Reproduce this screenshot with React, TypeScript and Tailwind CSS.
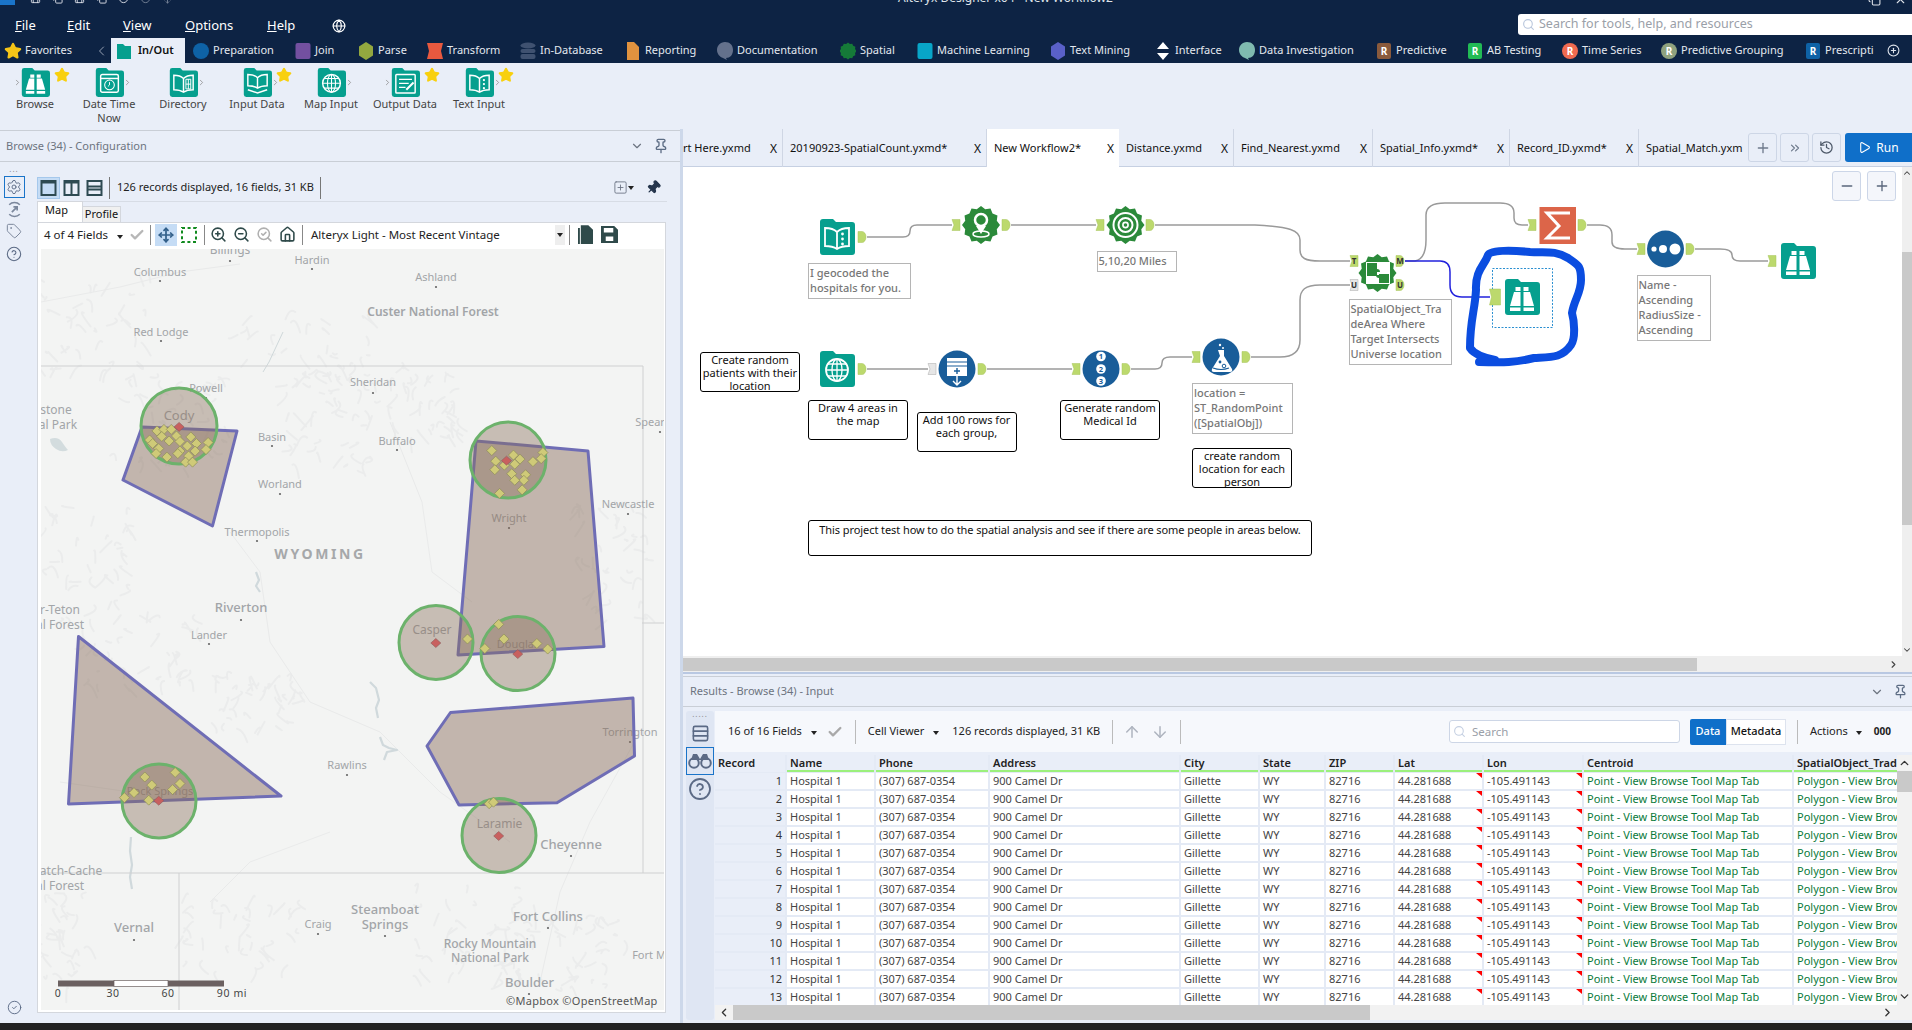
import type { ReactNode } from "react";
import {
  ArrowDown,
  ArrowUp,
  Check,
  ChevronDown,
  ChevronLeft,
  ChevronRight,
  ChevronUp,
  ChevronsRight,
  CircleCheck,
  CircleHelp,
  CirclePlus,
  Copy,
  Globe,
  History,
  House,
  Minus,
  Move,
  Pin,
  Play,
  Plus,
  Rows3,
  Save,
  Search,
  SearchCheck,
  Settings,
  SquarePlus,
  Star,
  Tag,
  ZoomIn,
  ZoomOut,
  X,
} from "lucide-react";

const TEAL = "#069f8e";
const GREEN = "#2b8a3a";
const BLUE = "#195d99";
const DARK = "#2e4a52";

function Caret() {
  return <span className="inline-block w-0 h-0 border-x-[3px] border-x-transparent border-t-[4px] border-t-[#222]" />;
}

function sealPoints(cx: number, cy: number, r: number) {
  const pts: string[] = [];
  for (let i = 0; i < 24; i++) {
    const a = (i * Math.PI) / 12;
    const rad = i % 2 === 0 ? r : r * 0.86;
    pts.push(`${cx + rad * Math.sin(a)},${cy - rad * Math.cos(a)}`);
  }
  return pts.join(" ");
}

/* ---------- tool glyphs, all on a 36x36 folder ---------- */

function Glyph({ kind }: { kind: string }) {
  const line = { fill: "none", stroke: "#fff", strokeWidth: 1.8 };
  const folder = (
    <path d="M1 3a3 3 0 0 1 3-3h10l3 3h16a3 3 0 0 1 3 3v27a3 3 0 0 1-3 3H4a3 3 0 0 1-3-3z" fill={TEAL} />
  );
  const book = <path d="M6 9c4 0 9 1 12 4 3-3 8-4 12-4v18c-4 0-9 1-12 3-3-2-8-3-12-3zM18 13v17" {...line} />;
  if (kind === "browse")
    return (
      <>
        {folder}
        <path
          d="M11.5 8h5v4h-5zM10 13h6.5v14H6zM6 28.5h10.5V32H6zM19.5 8h5v4h-5zM19.5 13H26l4 14H19.5zM19.5 28.5H30V32H19.5z"
          fill="#fff"
        />
      </>
    );
  if (kind === "clock")
    return (
      <>
        {folder}
        <rect x="7" y="8" width="22" height="22" rx="2" {...line} />
        <path d="M7 13h22" {...line} />
        <circle cx="18" cy="21" r="6" {...line} strokeWidth={1.3} />
        <path d="M18 17.5V21l-2 2" {...line} strokeWidth={1.2} />
      </>
    );
  if (kind === "directory")
    return (
      <>
        {folder}
        {book}
        <path d="M21 14h6v12h-6zM21 20h6M24 14v12" {...line} strokeWidth={1.2} />
      </>
    );
  if (kind === "input")
    return (
      <>
        {folder}
        <path d="M6 8c4 0 9 1 12 4 3-3 8-4 12-4v14c-4 0-9 1-12 3-3-2-8-3-12-3zM18 12v13" {...line} />
        <path d="M6 27l12 4 12-4" {...line} />
      </>
    );
  if (kind === "map")
    return (
      <>
        {folder}
        <circle cx="18" cy="19" r="11" {...line} />
        <ellipse cx="18" cy="19" rx="5" ry="11" {...line} strokeWidth={1.3} />
        <path d="M7 19h22M9 13h18M9 25h18M18 8v22" {...line} strokeWidth={1.3} />
      </>
    );
  if (kind === "output")
    return (
      <>
        {folder}
        <rect x="6" y="8" width="24" height="23" rx="1" {...line} />
        <path d="M10 14h16M10 19h12M10 24h8" {...line} strokeWidth={1.5} />
        <path d="M19 27l9-9" stroke="#fff" strokeWidth={2.5} />
      </>
    );
  return (
    <>
      {folder}
      {book}
      <circle cx="23.5" cy="15" r="1.4" fill="#fff" />
      <circle cx="23.5" cy="20" r="1.4" fill="#fff" />
      <circle cx="23.5" cy="25" r="1.4" fill="#fff" />
    </>
  );
}

/* ---------- header ---------- */

function PaletteIcon({ shape, color, text }: { shape: string; color: string; text?: string }) {
  if (shape === "star") return <Star size={18} fill="#f5c518" stroke="#f5c518" className="shrink-0" />;
  return (
    <svg viewBox="0 0 16 18" className="w-4 h-[18px] shrink-0">
      {shape === "folder" && <path d="M1 2h6l2 2h6v13H1z" fill={color} />}
      {shape === "circle" && <circle cx="8" cy="9" r="8" fill={color} />}
      {shape === "square" && <rect x="0.5" y="1" width="15" height="16" rx="2" fill={color} />}
      {shape === "hex" && <polygon points="8,0 15,4.5 15,13.5 8,18 1,13.5 1,4.5" fill={color} />}
      {shape === "banner" && <polygon points="0,1 16,1 14,9 16,17 0,17 2,9" fill={color} />}
      {shape === "db" && (
        <g fill={color}>
          <ellipse cx="8" cy="3.5" rx="7.5" ry="3" />
          <rect x="0.5" y="7" width="15" height="4" rx="2" />
          <rect x="0.5" y="12" width="15" height="5" rx="2" />
        </g>
      )}
      {shape === "doc" && <path d="M2 0h7l5 5v13H2z" fill={color} />}
      {shape === "bubble" && <path d="M8 0c5 0 8 3 8 8s-3 8-7 8l1 2-4-2C3 15 0 12 0 8s3-8 8-8z" fill={color} />}
      {shape === "seal" && <polygon points={sealPoints(8, 9, 8.5)} fill={color} />}
      {shape === "arrows" && <path d="M8 0l6 7H2zM8 18l6-7H2z" fill={color} />}
      {shape === "rsquare" && <rect x="1" y="1" width="14" height="16" rx="2" fill={color} />}
      {text && (
        <text x="8" y="12.5" textAnchor="middle" fontSize="10" fontWeight="700" fill="#fff">
          {text}
        </text>
      )}
    </svg>
  );
}

const palette = [
  { label: "Preparation", shape: "circle", color: "#0e62a6" },
  { label: "Join", shape: "square", color: "#7350a0" },
  { label: "Parse", shape: "hex", color: "#93a83f" },
  { label: "Transform", shape: "banner", color: "#e8593f" },
  { label: "In-Database", shape: "db", color: "#3f5170" },
  { label: "Reporting", shape: "doc", color: "#e0923f" },
  { label: "Documentation", shape: "bubble", color: "#64718c" },
  { label: "Spatial", shape: "seal", color: "#157a38" },
  { label: "Machine Learning", shape: "square", color: "#08a5c8" },
  { label: "Text Mining", shape: "hex", color: "#5960c8" },
  { label: "Interface", shape: "arrows", color: "#fff" },
  { label: "Data Investigation", shape: "bubble", color: "#7fbab0" },
  { label: "Predictive", shape: "rsquare", color: "#8a5a3c", text: "R" },
  { label: "AB Testing", shape: "rsquare", color: "#22bb55", text: "R" },
  { label: "Time Series", shape: "circle", color: "#f06a50", text: "R" },
  { label: "Predictive Grouping", shape: "circle", color: "#8fa27e", text: "R" },
  { label: "Prescripti", shape: "rsquare", color: "#0e62a6", text: "R" },
];

const favoriteTools = [
  { label: ["Browse"], kind: "browse", star: true, left: true },
  { label: ["Date Time", "Now"], kind: "clock", right: true },
  { label: ["Directory"], kind: "directory", right: true },
  { label: ["Input Data"], kind: "input", star: true, right: true },
  { label: ["Map Input"], kind: "map", right: true },
  { label: ["Output Data"], kind: "output", star: true, left: true },
  { label: ["Text Input"], kind: "text", star: true, right: true },
];

function Header() {
  return (
    <div className="bg-[#0d2344] h-[63px] shrink-0 text-white overflow-hidden">
      <div className="h-[14px] overflow-hidden flex items-start text-[#dfe3ea]">
        <div className="w-[15px] h-[5px] bg-[#1a74c9]" />
        <div className="flex gap-[11px] ml-[15px] -mt-[7px]">
          <Save size={11} />
          <Copy size={11} />
          <Save size={11} />
          <Copy size={11} />
          <History size={11} />
          <History size={11} className="opacity-50" />
          <Move size={11} className="opacity-50" />
        </div>
        <span className="ml-[725px] -mt-[11px] text-[12px] whitespace-nowrap">Alteryx Designer x64 - New Workflow2</span>
        <Copy size={13} className="ml-auto -mt-[7px]" />
        <X size={13} className="ml-[13px] mr-[5px] -mt-[7px]" />
      </div>
      <div className="h-[24px] flex items-center text-[13px]">
        <span className="ml-[15px] w-[52px]"><u>F</u>ile</span>
        <span className="w-[56px]"><u>E</u>dit</span>
        <span className="w-[62px]"><u>V</u>iew</span>
        <span className="w-[82px]"><u>O</u>ptions</span>
        <span className="w-[65px]"><u>H</u>elp</span>
        <Globe size={14} />
        <div className="ml-auto mb-[3px] w-[394px] h-[21px] bg-white rounded-l-[3px] flex items-center pl-[4px] gap-[4px] text-[12.5px] text-[#9aa0a8]">
          <Search size={13} className="text-[#b8c6dc]" />
          Search for tools, help, and resources
        </div>
      </div>
      <div className="h-[25px] flex items-center text-[11px] text-[#e4e8ef] w-[1912px]">
        <div className="w-[92px] shrink-0 pl-1 flex items-center gap-[3px]">
          <PaletteIcon shape="star" color="" />
          Favorites
        </div>
        <ChevronLeft size={16} strokeWidth={1.3} className="shrink-0 w-[19px] text-[#aab4c4]" />
        <div className="w-[74px] shrink-0 h-full bg-[#e9eef8] text-[#111] font-semibold flex items-center gap-[6px] pl-[5px]">
          <PaletteIcon shape="folder" color={TEAL} />
          In/Out
        </div>
        <div className="w-[8px] shrink-0" />
        <div className="shrink-0 grid grid-cols-[102px_63px_69px_93px_105px_92px_123px_77px_133px_105px_84px_137px_91px_95px_99px_144px_82px] items-center">
          {palette.map((p) => (
            <div key={p.label} className="flex items-center gap-[4px] whitespace-nowrap overflow-hidden">
              <PaletteIcon shape={p.shape} color={p.color} text={p.text} />
              {p.label}
            </div>
          ))}
        </div>
        <CirclePlus size={13} className="shrink-0 text-[#dfe4ec]" />
      </div>
    </div>
  );
}

function ToolPalette() {
  return (
    <div className="h-[66px] shrink-0 bg-[#e9eef8] grid grid-cols-[74px_74px_74px_74px_74px_74px_74px] -ml-[2px] pt-[5px]">
      {favoriteTools.map((t) => (
        <div key={t.kind} className="flex flex-col items-center text-[#444] text-[11px] leading-[14px]">
          <div className="relative w-[29px] h-[29px]">
            <svg viewBox="0 0 36 36" className="w-[29px] h-[29px]">
              <Glyph kind={t.kind} />
            </svg>
            {t.left && <ChevronRight size={9} className="absolute -left-[8px] top-[10px] text-[#888]" />}
            {t.right && <ChevronRight size={9} className="absolute -right-[8px] top-[10px] text-[#888]" />}
            {t.star && (
              <Star size={16} fill="#f8d00f" stroke="#f8d00f" className="absolute -right-[20px] -top-[1px]" />
            )}
          </div>
          <div className="text-center">
            {t.label.map((l) => (
              <div key={l}>{l}</div>
            ))}
          </div>
        </div>
      ))}
    </div>
  );
}

/* ---------- map ---------- */

// map points were read from a crop, so convert from crop space to page space
const zx = (x: number) => x / 2.306;
const zy = (y: number) => y / 1.985 + 240;

const polygons = [
  "142,425 237,429 212.5,524 123,478",
  "476,439 588,449 604,644.5 458,653",
  "78.5,634.5 281,794 68.5,802",
  "450.5,710.5 633,696 634.5,754 557,800.7 459,803 427,744",
];

const circles = [
  [179, 424, 38],
  [508, 458, 38],
  [436, 640.5, 37],
  [518, 651.6, 37],
  [159, 799, 37],
  [499, 833.5, 37],
];

const yellow = [
  [362, 375], [378, 372], [395, 372], [373, 386], [390, 395], [407, 385], [345, 393], [352, 400],
  [366, 410], [385, 427], [415, 396], [440, 387], [453, 400], [480, 398], [432, 405], [415, 415],
  [450, 415], [475, 412], [435, 425], [428, 437], [444, 437], [410, 420], [360, 420],
  [1134, 414], [1184, 423], [1143, 435], [1199, 431], [1187, 441], [1163, 443], [1141, 452],
  [1229, 436], [1252, 418], [1248, 430], [1180, 460], [1212, 462], [1208, 473], [1187, 473],
  [1204, 492], [1152, 499], [1078, 788],
  [1150, 759], [1162, 788], [1238, 797], [1263, 808], [1118, 807],
  [334, 1062], [350, 1078], [404, 1053], [415, 1075], [398, 1087], [309, 1093], [287, 1103], [343, 1108],
  [1128, 1115], [1138, 1112],
];

const red = [[413, 367], [1168, 434], [1005, 796], [1194, 818], [366, 1109], [1150, 1179]];

const labels: [string, number, number, number?, string?][] = [
  ["Billings", 230, 253, 12],
  ["Hardin", 312, 263],
  ["Columbus", 160, 275],
  ["Ashland", 436, 280],
  ["Custer National Forest", 433, 315, 12, "600"],
  ["Red Lodge", 161, 335],
  ["Powell", 206, 391],
  ["Sheridan", 373, 385],
  ["Spear", 650, 425],
  ["stone", 56, 413, 12],
  ["al Park", 58, 428, 12],
  ["Cody", 179, 419, 13],
  ["Basin", 272, 440],
  ["Buffalo", 397, 444],
  ["Worland", 280, 487],
  ["Newcastle", 628, 507],
  ["Wright", 509, 521],
  ["Thermopolis", 257, 535],
  ["Riverton", 241, 611, 13, "500"],
  ["r-Teton", 60, 613, 12],
  ["al Forest", 60, 628, 12],
  ["Lander", 209, 638],
  ["Casper", 432, 633, 12],
  ["Douglas", 518, 647],
  ["Torrington", 630, 735],
  ["Rawlins", 347, 768],
  ["Rock Springs", 160, 794],
  ["Laramie", 499.5, 827, 12],
  ["Cheyenne", 571, 848, 13, "500"],
  ["atch-Cache", 71, 874, 12],
  ["al Forest", 60, 889, 12],
  ["Steamboat", 385, 913, 13, "500"],
  ["Springs", 385, 928, 13, "500"],
  ["Vernal", 134, 931, 13, "500"],
  ["Craig", 318, 927],
  ["Fort Collins", 548, 920, 13, "500"],
  ["Rocky Mountain", 490, 947, 12, "500"],
  ["National Park", 490, 961, 12, "500"],
  ["Fort M", 649, 958],
  ["Boulder", 529.5, 986, 13, "500"],
];

const dots = [
  [230, 259], [312, 267], [160, 279], [436, 285], [161, 339], [206, 396], [373, 391], [660, 430],
  [272, 444], [397, 448], [280, 492], [628, 512], [509, 526], [257, 539], [241, 618], [209, 642],
  [630, 740], [347, 773], [571, 854], [385, 934], [134, 938], [318, 932], [548, 926], [529, 992],
];

// soft relief strokes, same sequence every render
function reliefStrokes() {
  const zones = [
    [95, 320, 55, 55], [170, 420, 60, 50], [300, 350, 70, 40], [90, 560, 45, 60], [140, 650, 60, 40],
    [330, 420, 45, 50], [420, 400, 40, 40], [470, 930, 70, 50], [560, 950, 70, 40], [240, 930, 60, 40],
    [60, 940, 30, 50], [610, 560, 40, 60], [260, 700, 50, 30],
  ];
  let seed = 7;
  const next = () => {
    seed = (seed * 16807) % 2147483647;
    return seed / 2147483647;
  };
  const out: string[] = [];
  zones.forEach(([cx, cy, rx, ry]) => {
    for (let i = 0; i < 40; i++) {
      const x = cx + (next() * 2 - 1) * rx;
      const y = cy + (next() * 2 - 1) * ry;
      out.push(`M${x.toFixed(1)} ${y.toFixed(1)}q${(next() * 14 - 7).toFixed(1)} ${(next() * 12 - 6).toFixed(1)} ${(next() * 22 - 11).toFixed(1)} ${(next() * 14).toFixed(1)}`);
    }
  });
  return out.join("");
}

function MapCanvas() {
  return (
    <svg viewBox="41 247 623 761" className="w-[623px] h-[761px] block bg-[#f3f4f3] font-['Noto_Sans',sans-serif]">
      <path d={reliefStrokes()} fill="none" stroke="#ebecec" strokeWidth="2" strokeLinecap="round" />
      <path d="M41 300L120 285 180 270 240 262M390 420l12 30 20 50 10 70 40 30M230 530l30 40 10 70 40 60 70 30 60 60 70 50M60 780l70 10M640 730l-50 90-30 70-20 90M330 830l-80 30-40 40" fill="none" stroke="#e9eaea" strokeWidth="1" />
      <path d="M50 437q8-3 12 3t6 8q-6 3-12-1t-6-10z" fill="#d3dcde" />
      <path d="M256 570l3 8-3 6 4 6M370 680l6 6 3 12-3 8 2 10M380 735l3 8 6 3 8 2-10 2-3 8M131 835l-1 14 2 14-2 12 2 12" fill="none" stroke="#d0d9dc" strokeWidth="2.2" strokeLinejoin="round" />
      <path d="M283 330l-14 30-6 10" fill="none" stroke="#cfd8da" strokeWidth="1" />
      <path d="M41 364H643V871M41 871H664M179 871V1008M642 621H664" fill="none" stroke="#cfd0d1" strokeWidth="1" />
      {labels.map(([t, x, y, size, weight]) => (
        <text key={`${t}${x}`} x={x} y={y - 1} textAnchor="middle" fontSize={size ?? 11} fontWeight={weight ?? 400} fill="#a2a5a8">
          {t}
        </text>
      ))}
      <text x="320" y="557" textAnchor="middle" fontSize="14" fontWeight="700" letterSpacing="2.6" fill="#a6a8aa">
        WYOMING
      </text>
      {dots.map(([x, y]) => (
        <circle key={`${x}-${y}`} cx={x} cy={y} r="1.1" fill="#666" />
      ))}
      {polygons.map((p) => (
        <polygon key={p} points={p} fill="#8b6f5e" fillOpacity="0.47" stroke="#6f6db5" strokeWidth="3" strokeLinejoin="round" />
      ))}
      {circles.map(([x, y, r]) => (
        <circle key={x} cx={x} cy={y} r={r} fill="#8b6f5e" fillOpacity="0.42" stroke="#6cb26b" strokeWidth="3" />
      ))}
      {yellow.map(([x, y]) => {
        const cx = zx(x);
        const cy = zy(y);
        return (
          <polygon
            key={`${x}-${y}`}
            points={`${cx},${cy - 5} ${cx + 5},${cy} ${cx},${cy + 5} ${cx - 5},${cy}`}
            fill="#cfca78"
            stroke="#8c8c5a"
            strokeWidth="0.7"
          />
        );
      })}
      {red.map(([x, y]) => {
        const cx = zx(x);
        const cy = zy(y);
        return (
          <polygon
            key={`${x}-${y}`}
            points={`${cx},${cy - 4.5} ${cx + 5},${cy} ${cx},${cy + 4.5} ${cx - 5},${cy}`}
            fill="#c8605f"
            stroke="#8c5a5a"
            strokeWidth="0.6"
          />
        );
      })}
      <rect x="58" y="978.5" width="56" height="6" fill="#6b6060" />
      <rect x="114" y="978.5" width="54" height="6" fill="#fff" stroke="#6b6060" strokeWidth="0.7" />
      <rect x="168" y="978.5" width="56" height="6" fill="#6b6060" />
      <g fontSize="10.5" fill="#444" letterSpacing="0.6">
        <text x="58" y="995" textAnchor="middle">0</text>
        <text x="113" y="995" textAnchor="middle">30</text>
        <text x="168" y="995" textAnchor="middle">60</text>
        <text x="232" y="995" textAnchor="middle">90 mi</text>
      </g>
      <text x="506" y="1003" fontSize="11" fill="#555" letterSpacing="0.3">©Mapbox ©OpenStreetMap</text>
    </svg>
  );
}

function LayoutIcon({ kind }: { kind: "single" | "cols" | "rows" }) {
  return (
    <svg viewBox="0 0 16 16" className="w-[17px] h-[16px]" fill="none" stroke={DARK}>
      <rect x="1" y="1" width="14" height="14" strokeWidth="2" />
      {kind !== "rows" && <path d="M1 2.5h14" strokeWidth="2" />}
      {kind === "cols" && <path d="M8 1v14" strokeWidth="2" />}
      {kind === "rows" && <path d="M1 6.5h14M1 9.5h14" strokeWidth="2" />}
    </svg>
  );
}

function ConfigPanel() {
  return (
    <div className="w-[680px] shrink-0 flex flex-col">
      <div className="h-[32px] mt-[1px] border-y border-[#c9ced6] flex items-center pl-[6px] pr-[11px] text-[11px] text-[#6d7480]">
        <span className="flex-1">Browse (34) - Configuration</span>
        <ChevronDown size={14} className="mr-[9px] text-[#6d7480]" />
        <Pin size={16} className="text-[#5c6c84]" />
      </div>
      <div className="flex-1 flex min-h-0">
        <div className="w-[33px] flex flex-col items-center pt-[4px] text-[#5b6a85]">
          <div className="text-[8px] leading-[6px] tracking-[1px] text-[#888] mr-[5px]">...</div>
          <div className="mt-[4px] w-[21px] h-[22px] border border-[#1a74c9] flex items-center justify-center mr-[5px]">
            <Settings size={16} strokeWidth={1.4} />
          </div>
          <svg viewBox="0 0 16 16" className="mt-[3px] mr-[5px] w-[17px] h-[17px]" fill="none" stroke="#7b879c" strokeWidth="1.4">
            <path d="M3 3.5A7 7 0 0 1 13 3.5M13 12.5A7 7 0 0 1 3 12.5" />
            <path d="M5.5 10.5l5-5M7 5.5h3.5V9" strokeWidth="1.6" />
          </svg>
          <Tag size={16} strokeWidth={1.5} className="mt-[5px] mr-[5px] text-[#7b879c]" />
          <CircleHelp size={16} strokeWidth={1.6} className="mt-[7px] mr-[5px]" />
          <CircleCheck size={15} strokeWidth={1.5} className="mt-auto mb-[8px] mr-[5px]" />
        </div>
        <div className="w-[630px] ml-[4px] flex flex-col">
          <div className="h-[38px] pt-[13px] flex items-center text-[11px] text-[#222]">
            <div className="w-[23px] h-[22px] bg-[#c5dcf5] border border-[#a5c8ec] flex items-center justify-center">
              <LayoutIcon kind="single" />
            </div>
            <span className="ml-[3px]"><LayoutIcon kind="cols" /></span>
            <span className="ml-[6px]"><LayoutIcon kind="rows" /></span>
            <div className="ml-[6px] w-px h-[22px] bg-[#777]" />
            <span className="ml-[7px]">126 records displayed, 16 fields, 31 KB</span>
            <div className="ml-[6px] w-px h-[22px] bg-[#777]" />
            <SquarePlus size={15} strokeWidth={1.4} className="ml-auto text-[#6b7484]" />
            <Caret />
            <Pin size={15} fill="#26364d" className="ml-[12px] mr-[6px] rotate-45 text-[#26364d]" />
          </div>
          <div className="h-[21px] flex items-end text-[11px] border-t border-[#d7dce5] mt-[1px]">
            <div className="w-[46px] h-[21px] pb-[3px] pl-[7px] bg-white border border-b-0 border-[#d4d7dd] flex items-center text-[#111]">
              Map
            </div>
            <div className="w-[38px] h-[16px] bg-[#f0f0f0] border border-b-0 border-l-0 border-[#d4d7dd] flex items-center justify-center text-[#111]">
              Profile
            </div>
          </div>
          <div className="h-[791px] shrink-0 bg-white border border-[#d4d7dd] w-[629px] flex flex-col overflow-hidden">
            <div className="h-[26px] shrink-0 pb-[3px] flex items-center text-[11.5px] text-[#222]">
              <span className="ml-[6px]">4 of 4 Fields</span>
              <span className="ml-[9px]"><Caret /></span>
              <Check size={16} strokeWidth={3.5} className="ml-[6px] text-[#b7b7b7]" />
              <div className="ml-[5px] w-px h-[20px] bg-[#888]" />
              <div className="ml-[4px] w-[22px] h-[22px] bg-[#c5dcf5] flex items-center justify-center">
                <Move size={16} strokeWidth={2.6} className="text-[#33608a]" />
              </div>
              <svg viewBox="0 0 16 16" className="ml-[4px] w-[16px] h-[16px]" fill="none" stroke="#118a1f" strokeWidth="2">
                <rect x="1" y="1" width="14" height="14" strokeDasharray="3 2.6" />
              </svg>
              <div className="ml-[7px] w-px h-[20px] bg-[#888]" />
              <ZoomIn size={17} strokeWidth={2.2} className="ml-[5px] text-[#2f4a4a]" />
              <ZoomOut size={17} strokeWidth={2.2} className="ml-[6px] text-[#2f4a4a]" />
              <SearchCheck size={17} strokeWidth={2.2} className="ml-[6px] text-[#b0b0b0]" />
              <House size={17} strokeWidth={2.2} className="ml-[6px] text-[#2f4a4a]" />
              <div className="ml-[6px] w-px h-[20px] bg-[#888]" />
              <span className="ml-[8px] w-[244px]">Alteryx Light - Most Recent Vintage</span>
              <div className="w-[10px] h-[20px] bg-[#eee] flex items-center justify-center">
                <Caret />
              </div>
              <div className="ml-[4px] w-px h-[20px] bg-[#888]" />
              <svg viewBox="0 0 16 20" className="ml-[8px] w-[15px] h-[19px]" fill="#2f4a4a">
                <path d="M3 0h8l5 5v15H3z" />
                <path d="M0 3v17h2V3z" />
              </svg>
              <svg viewBox="0 0 18 18" className="ml-[8px] w-[17px] h-[17px]" fill="#2f4a4a">
                <path d="M0 0h14l4 4v14H0zM3 2v5h10V2zM5 11v5h8v-5z" fillRule="evenodd" />
              </svg>
            </div>
            <div className="ml-[3px]">
              <MapCanvas />
            </div>
          </div>
        </div>
      </div>
    </div>
  );
}

/* ---------- workflow canvas ---------- */

const docTabs = [
  { name: "rt Here.yxmd" },
  { name: "20190923-SpatialCount.yxmd*" },
  { name: "New Workflow2*", active: true },
  { name: "Distance.yxmd" },
  { name: "Find_Nearest.yxmd" },
  { name: "Spatial_Info.yxmd*" },
  { name: "Record_ID.yxmd*" },
];

function DocTabs() {
  return (
    <div className="h-[38px] shrink-0 flex items-stretch text-[11px] text-[#111] border-b border-[#c6d0e2]">
      <div className="grid grid-cols-[100px_204px_132px_115px_139px_137px_129px]">
        {docTabs.map((t) => (
          <div
            key={t.name}
            className={
              t.active
                ? "bg-white flex items-center pl-[7px] pr-[5px] h-[38px] pt-[1px] whitespace-nowrap"
                : "flex items-center pl-[7px] first:pl-0 pr-[5px] pt-[1px] border-r border-[#cfd6e4] whitespace-nowrap"
            }
          >
            <span className="flex-1">{t.name}</span>
            <span className="text-[12px]">X</span>
          </div>
        ))}
      </div>
      <div className="w-[106px] pl-[7px] pt-[1px] flex items-center overflow-hidden whitespace-nowrap">Spatial_Match.yxm</div>
      <div className="flex items-center gap-[3px] ml-[3px]">
        <button className="w-[29px] h-[29px] border border-[#cdd6e6] rounded-[3px] flex items-center justify-center text-[#6e7a8c]">
          <Plus size={16} />
        </button>
        <button className="w-[29px] h-[29px] border border-[#cdd6e6] rounded-[3px] flex items-center justify-center text-[#6e7a8c]">
          <ChevronsRight size={14} />
        </button>
        <button className="w-[29px] h-[29px] border border-[#cdd6e6] rounded-[3px] flex items-center justify-center text-[#4d5868]">
          <History size={15} />
        </button>
      </div>
      <button className="ml-[4px] w-[67px] h-[29px] mt-[4px] bg-[#0f6fc9] rounded-l-[3px] text-white text-[12px] flex items-center justify-center gap-[5px]">
        <Play size={13} />
        Run
      </button>
    </div>
  );
}

const comments = [
  { text: ["I geocoded the", "hospitals for you."], x: 808, y: 263, w: 103, h: 36, gray: true },
  { text: ["5,10,20 Miles"], x: 1096.5, y: 251, w: 80, h: 21, gray: true },
  { text: ["Create random", "patients with their", "location"], x: 700, y: 352, w: 100, h: 40 },
  { text: ["Draw 4 areas in", "the map"], x: 808, y: 400, w: 100, h: 40 },
  { text: ["Add 100 rows for", "each group,"], x: 916.5, y: 412, w: 100, h: 40 },
  { text: ["Generate random", "Medical Id"], x: 1060, y: 400, w: 100, h: 40 },
  { text: ["location =", "ST_RandomPoint", "([SpatialObj])"], x: 1192, y: 383, w: 101, h: 51, gray: true },
  { text: ["create random", "location for each", "person"], x: 1192, y: 448, w: 100, h: 40 },
  {
    text: ["SpatialObject_Tra", "deArea Where", "Target Intersects", "Universe location"],
    x: 1348.5,
    y: 299,
    w: 103,
    h: 66,
    gray: true,
  },
  { text: ["Name -", "Ascending", "RadiusSize -", "Ascending"], x: 1636.5, y: 275, w: 74, h: 66, gray: true },
  {
    text: ["This project test how to do the spatial analysis and see if there are some people in areas below."],
    x: 808,
    y: 520,
    w: 504,
    h: 36,
    tight: true,
  },
];

function InAnchor({ x, y, big, label, plain }: { x: number; y: number; big?: boolean; label?: string; plain?: boolean }) {
  const w = big ? 11 : 8;
  const h = big ? 16 : 11;
  return (
    <g>
      <path
        d={`M${x - w / 2} ${y - h / 2}h${w}v${h}h-${w}l2 -${h / 2}z`}
        fill={plain ? "#e6e6e6" : "#bcd96d"}
        stroke={plain ? "#aaa" : "#a6c45a"}
        strokeWidth="0.5"
      />
      {label && (
        <text x={x} y={y + 3} textAnchor="middle" fontSize="8" fontWeight="700" fill="#333">
          {label}
        </text>
      )}
    </g>
  );
}

function OutAnchor({ x, y, label }: { x: number; y: number; label?: string }) {
  return (
    <g>
      <path d={`M${x - 4} ${y - 5.5}h4a4 5.5 0 0 1 0 11h-4z`} fill="#bcd96d" stroke="#a6c45a" strokeWidth="0.5" />
      {label && (
        <text x={x} y={y + 3} textAnchor="middle" fontSize="8" fontWeight="700" fill="#333">
          {label}
        </text>
      )}
    </g>
  );
}

function Folder({ x, y, kind }: { x: number; y: number; kind: string }) {
  return (
    <svg x={x} y={y} width="36" height="36" viewBox="0 0 36 36">
      <Glyph kind={kind} />
    </svg>
  );
}

function WorkflowSvg() {
  const wire = { fill: "none", stroke: "#9a9a9a", strokeWidth: 1.5 };
  return (
    <svg viewBox="683 167 1219 489" className="absolute inset-0 w-[1219px] h-[489px]">
      <path d="M867 237H903Q910 237 910 231Q910 225 917 225H952" {...wire} />
      <path d="M1011 225H1096" {...wire} />
      <path d="M1155 225H1255C1290 227 1300 230 1300 240V250C1300 258 1305 261 1320 261H1350" {...wire} />
      <path d="M867 369H928" {...wire} />
      <path d="M987 369H1072" {...wire} />
      <path d="M1131 369H1155Q1162 369 1162 363Q1162 357 1170 357H1192" {...wire} />
      <path d="M1251 357H1280C1295 357 1300 350 1300 340V300C1300 290 1305 285 1320 285H1350" {...wire} />
      <path d="M1405 261H1415Q1426 259 1426 240V215Q1426 203 1445 203H1500Q1514 203 1514 213V218Q1514 225 1522 225H1528" {...wire} />
      <path d="M1587 225H1600Q1612 225 1612 235V242Q1612 249 1625 249H1637" {...wire} />
      <path d="M1695 249H1720Q1732 249 1732 255Q1732 261 1740 261H1768" {...wire} />
      <path d="M1405 261H1440Q1450 261 1450 272V285Q1450 297 1462 297H1490" fill="none" stroke="#2222dd" strokeWidth="1.5" />

      <Folder x={819} y={219} kind="text" />
      <OutAnchor x={862} y={237} />

      <InAnchor x={956} y={225} />
      <polygon points={sealPoints(981, 225, 19)} fill={GREEN} />
      <circle cx="981" cy="220" r="6" fill="none" stroke="#fff" strokeWidth="2.5" />
      <path d="M981 234l-5-8h10z" fill="#fff" />
      <ellipse cx="981" cy="234" rx="8" ry="3" fill="none" stroke="#fff" strokeWidth="1.5" />
      <OutAnchor x={1006} y={225} />

      <InAnchor x={1100} y={225} />
      <polygon points={sealPoints(1125.5, 225, 19)} fill={GREEN} />
      <circle cx="1125.5" cy="225" r="12" fill="none" stroke="#fff" strokeWidth="2" />
      <circle cx="1125.5" cy="225" r="7" fill="none" stroke="#fff" strokeWidth="2" />
      <circle cx="1125.5" cy="225" r="2.6" fill="none" stroke="#fff" strokeWidth="1.6" />
      <OutAnchor x={1150} y={225} />

      <Folder x={819} y={351} kind="map" />
      <OutAnchor x={862} y={369} />

      <InAnchor x={932} y={369} plain />
      <circle cx="957" cy="369" r="18.5" fill={BLUE} />
      <rect x="947" y="358" width="20" height="18" fill="#fff" />
      <path d="M947 362h20M947 366h20" stroke={BLUE} strokeWidth="1.2" />
      <path d="M954 371h6M957 368v6" fill="none" stroke={BLUE} strokeWidth="1.4" />
      <path d="M957 376v8M953 381l4 4 4-4" fill="none" stroke="#fff" strokeWidth="1.4" />
      <OutAnchor x={982} y={369} />

      <InAnchor x={1076} y={369} />
      <circle cx="1101" cy="369" r="18.5" fill={BLUE} />
      <circle cx="1101" cy="356.5" r="4.8" fill="#fff" />
      <circle cx="1101" cy="369" r="4.8" fill="#fff" />
      <circle cx="1101" cy="381" r="4.8" fill="#fff" />
      <g fontSize="7.5" fontWeight="700" fill={BLUE} textAnchor="middle">
        <text x="1101" y="359.2">1</text>
        <text x="1101" y="371.7">2</text>
        <text x="1101" y="383.7">3</text>
      </g>
      <OutAnchor x={1126} y={369} />

      <InAnchor x={1196} y={357} />
      <circle cx="1221" cy="357" r="18.5" fill={BLUE} />
      <path d="M1218 350h6v6l8 13q1 3-2 3h-16q-3 0-2-3l8-13z" fill="#fff" />
      <circle cx="1220" cy="362" r="1.4" fill={BLUE} />
      <circle cx="1224" cy="366" r="1.8" fill="none" stroke={BLUE} />
      <path d="M1213 368q8 3 16 0" fill="none" stroke={BLUE} strokeWidth="1.2" />
      <circle cx="1220" cy="345" r="1.2" fill="#fff" />
      <circle cx="1223" cy="348" r="1" fill="#fff" />
      <OutAnchor x={1246} y={357} />

      <polygon points={sealPoints(1377.5, 273, 19)} fill={GREEN} />
      <rect x="1366" y="262" width="24" height="22" fill="#fff" />
      <path d="M1367 263h10v6q3 0 3 3h-3v4h-10z" fill={GREEN} />
      <path d="M1389 283h-10v-5q-3 0-3-3h3v-1h10z" fill={GREEN} />
      <InAnchor x={1354} y={261} label="T" />
      <InAnchor x={1354} y={285} label="U" plain />
      <OutAnchor x={1400} y={261} label="M" />
      <OutAnchor x={1400} y={285} label="U" />

      <InAnchor x={1532} y={225} />
      <rect x="1539.5" y="207" width="36.5" height="37" fill="#dc6549" />
      <path d="M1570 213h-23l12 13-12 12h23" fill="none" stroke="#fff" strokeWidth="3" />
      <OutAnchor x={1582} y={225} />

      <InAnchor x={1641} y={249} />
      <circle cx="1665.5" cy="249" r="18.5" fill={BLUE} />
      <circle cx="1654" cy="249" r="2.6" fill="#fff" />
      <circle cx="1663" cy="249" r="4" fill="#fff" />
      <circle cx="1675" cy="249" r="5.5" fill="#fff" />
      <OutAnchor x={1690} y={249} />

      <Folder x={1780} y={243} kind="browse" />
      <InAnchor x={1772} y={261} />

      <rect x="1492.5" y="268.5" width="60" height="59" fill="none" stroke="#2a8fd1" strokeDasharray="2 1.5" />
      <Folder x={1504} y={279} kind="browse" />
      <InAnchor x={1495} y={297} big />

      <path
        d="M1479 362C1495 362 1510 364 1534 358C1552 357 1562 358 1571 345C1576 338 1574 320 1572 313C1574 300 1581 293 1581 280C1581 265 1578 265 1568 258C1555 250 1545 253 1530 252C1510 250 1490 250 1488 255C1485 265 1475 270 1476 290C1475 310 1470 320 1470 348C1474 354 1485 358 1495 360"
        fill="none"
        stroke="#0b4de0"
        strokeWidth="8"
        strokeLinecap="round"
        strokeLinejoin="round"
      />
    </svg>
  );
}

function Comment({ c }: { c: (typeof comments)[number] }) {
  const base = c.gray
    ? "absolute border border-[#b5b5b5] bg-white text-left text-[#777] font-medium text-[11px] leading-[15px] pl-[1px] pt-[1px] whitespace-nowrap overflow-hidden"
    : "absolute border border-black rounded-[3px] bg-white text-center text-[#111] text-[11px] leading-[13px] whitespace-nowrap overflow-hidden";
  return (
    <div
      className={`${base} ${c.tight ? "tracking-[-0.08px] pt-[2px]" : ""}`}
      style={{ left: c.x - 683, top: c.y - 167, width: c.w, height: c.h }}
    >
      {c.text.map((l) => (
        <div key={l}>{l}</div>
      ))}
    </div>
  );
}

function Canvas() {
  return (
    <div className="h-[505px] shrink-0 bg-white flex flex-col">
      <div className="flex-1 flex min-h-0">
        <div className="flex-1 relative overflow-hidden">
          <WorkflowSvg />
          {comments.map((c) => (
            <Comment key={c.text[0]} c={c} />
          ))}
          <div className="absolute right-[6px] top-[4px] flex gap-[6px] text-[#59677c]">
            <button className="w-[29px] h-[30px] rounded-[3px] border border-[#ccd6e8] bg-[#f4f6fb] flex items-center justify-center">
              <Minus size={16} strokeWidth={2.4} />
            </button>
            <button className="w-[29px] h-[30px] rounded-[3px] border border-[#ccd6e8] bg-[#f4f6fb] flex items-center justify-center">
              <Plus size={16} />
            </button>
          </div>
        </div>
        <div className="w-[10px] flex flex-col items-center bg-[#efefef]">
          <div className="h-[85px] w-full flex justify-center">
            <ChevronUp size={10} strokeWidth={2.5} className="mt-[1px] text-[#444]" />
          </div>
          <div className="h-[273px] w-full bg-[#c9c9c9]" />
          <ChevronDown size={10} strokeWidth={2.5} className="mt-auto mb-[1px] text-[#444]" />
        </div>
      </div>
      <div className="h-[16px] flex items-center bg-[#efefef]">
        <div className="w-[1014px] h-[13px] bg-[#c9c9c9]" />
        <ChevronRight size={11} strokeWidth={2.5} className="ml-auto mr-[13px] text-[#444]" />
      </div>
    </div>
  );
}

/* ---------- results ---------- */

const columns = ["Record", "Name", "Phone", "Address", "City", "State", "ZIP", "Lat", "Lon", "Centroid", "SpatialObject_TradeArea"];
const rows = [1, 2, 3, 4, 5, 6, 7, 8, 9, 10, 11, 12, 13, 14];
const gridCols =
  "grid grid-cols-[70px_87px_112px_189px_77px_64px_67px_87px_98px_208px_103px] gap-x-[2px]";

function Cell({ children, flag, cls }: { children: ReactNode; flag?: boolean; cls?: string }) {
  return (
    <div className={`relative h-[16px] leading-[16px] bg-white px-[3px] overflow-hidden whitespace-nowrap text-[#444] ${cls ?? ""}`}>
      {children}
      {flag && (
        <span className="absolute right-0 top-0 w-[6px] h-[5px] bg-[#f00] [clip-path:polygon(0_0,100%_0,100%_100%)]" />
      )}
    </div>
  );
}

function ResultsTable() {
  return (
    <div className="flex-1 min-h-0 flex flex-col">
      <div className="h-[250px] flex bg-[#e4eaf5] text-[11px] overflow-hidden">
        <div className="w-[1182px] shrink-0 min-w-0">
          <div className={`${gridCols} h-[18px]`}>
            {columns.map((c) => (
              <div
                key={c}
                className="h-[17px] border-b-2 border-[#9cf07c] first:border-b-0 bg-[#e9eef8] font-semibold text-[#222] leading-[16px] px-[3px] whitespace-nowrap overflow-hidden"
              >
                {c}
              </div>
            ))}
          </div>
          {rows.map((r) => (
            <div key={r} className={`${gridCols} h-[18px]`}>
              <Cell cls="!bg-[#e9eef8] text-right !text-[#333]">{r}</Cell>
              <Cell>Hospital 1</Cell>
              <Cell>(307) 687-0354</Cell>
              <Cell>900 Camel Dr</Cell>
              <Cell>Gillette</Cell>
              <Cell>WY</Cell>
              <Cell>82716</Cell>
              <Cell flag>44.281688</Cell>
              <Cell flag>-105.491143</Cell>
              <Cell cls="!text-[#0a7a3a]">Point - View Browse Tool Map Tab</Cell>
              <Cell cls="!text-[#0a7a3a]">Polygon - View Browse Tool Map Tab</Cell>
            </div>
          ))}
        </div>
        <div className="w-[15px] shrink-0 bg-[#f2f2f2] flex flex-col items-center">
          <ChevronUp size={13} strokeWidth={2.4} className="h-[16px] text-[#333]" />
          <div className="w-full h-[21px] bg-[#c9c9c9]" />
          <ChevronDown size={13} strokeWidth={2.4} className="mt-auto mb-[2px] text-[#333]" />
        </div>
      </div>
      <div className="h-[15px] flex items-center bg-[#f2f2f2]">
        <ChevronLeft size={13} strokeWidth={2.4} className="w-[18px] text-[#333]" />
        <div className="w-[637px] h-full bg-[#c9c9c9]" />
        <ChevronRight size={13} strokeWidth={2.4} className="ml-auto mr-[18px] text-[#333]" />
      </div>
    </div>
  );
}

function Results() {
  return (
    <div className="flex-1 min-h-0 flex flex-col">
      <div className="h-[31px] shrink-0 border-y border-[#c9ced6] flex items-center pl-[7px] pr-[4px] text-[11px] text-[#6d7480]">
        <span className="flex-1">Results - Browse (34) - Input</span>
        <ChevronDown size={14} className="mr-[9px]" />
        <Pin size={15} className="text-[#5c6c84]" />
      </div>
      <div className="flex-1 min-h-0 flex pt-[4px] pb-[3px] pl-[3px]">
        <div className="w-[28px] shrink-0 bg-[#dfe6f3] rounded-[3px] flex flex-col items-center text-[#5b6a85]">
          <div className="text-[8px] leading-[5px] tracking-[1px] text-[#888]">.....</div>
          <Rows3 size={19} strokeWidth={2} className="mt-[8px]" />
          <div className="mt-[4px] w-[28px] h-[28px] border border-[#1a74c9] flex items-center justify-center">
            <svg viewBox="0 0 24 16" className="w-[24px] h-[16px]">
              <circle cx="6" cy="10" r="4.8" fill="none" stroke="#5b6a85" strokeWidth="2" />
              <circle cx="18" cy="10" r="4.8" fill="none" stroke="#5b6a85" strokeWidth="2" />
              <path d="M5 1h4l3 5 3-5h4l2 6H3z" fill="#5b6a85" />
            </svg>
          </div>
          <CircleHelp size={24} strokeWidth={1.8} className="mt-[2px]" />
        </div>
        <div className="flex-1 min-w-0 ml-[1px] flex flex-col">
          <div className="h-[41px] shrink-0 bg-[#f6f8fc] flex items-center text-[11px] text-[#222]">
            <span className="ml-[13px]">16 of 16 Fields</span>
            <span className="ml-[9px]"><Caret /></span>
            <Check size={16} strokeWidth={3.5} className="ml-[10px] text-[#a9a9a9]" />
            <div className="ml-[12px] w-px h-[24px] bg-[#bbb]" />
            <span className="ml-[12px]">Cell Viewer</span>
            <span className="ml-[9px]"><Caret /></span>
            <span className="ml-[13px]">126 records displayed, 31 KB</span>
            <div className="ml-[12px] w-px h-[24px] bg-[#bbb]" />
            <ArrowUp size={18} className="ml-[10px] text-[#aeb4bf]" />
            <ArrowDown size={18} className="ml-[10px] text-[#aeb4bf]" />
            <div className="ml-[11px] w-px h-[24px] bg-[#bbb]" />
            <div className="ml-auto w-[231px] h-[23px] bg-white border border-[#cdd6e6] rounded-[3px] flex items-center pl-[3px] gap-[6px] text-[11.5px] text-[#9aa0a8]">
              <Search size={13} className="text-[#c5d0e2]" />
              Search
            </div>
            <div className="ml-[10px] h-[26px] w-[36px] bg-[#0f6fc9] text-white font-medium rounded-l-[2px] flex items-center justify-center">
              Data
            </div>
            <div className="h-[26px] w-[60px] bg-white border border-[#dde3ee] font-medium text-[#111] flex items-center justify-center">
              Metadata
            </div>
            <div className="ml-[11px] w-px h-[24px] bg-[#bbb]" />
            <span className="ml-[12px]">Actions</span>
            <span className="ml-[8px]"><Caret /></span>
            <span className="ml-[12px] mr-[21px] font-bold text-[10px]">000</span>
          </div>
          <div className="h-[3px] shrink-0" />
          <ResultsTable />
        </div>
      </div>
    </div>
  );
}

export default function App() {
  return (
    <div className="w-[1912px] h-[1030px] overflow-hidden flex flex-col bg-[#e9eef8] font-['Noto_Sans','Liberation_Sans',sans-serif]">
      <Header />
      <ToolPalette />
      <div className="flex-1 min-h-0 flex">
        <ConfigPanel />
        <div className="w-[3px] shrink-0 bg-[#cdd8ea]" />
        <div className="flex-1 min-w-0 flex flex-col">
          <DocTabs />
          <Canvas />
          <div className="h-[2px] shrink-0 bg-[#b9c8e2]" />
          <div className="h-[2px] shrink-0" />
          <Results />
        </div>
      </div>
      <div className="h-[7px] shrink-0 bg-[#222]" />
    </div>
  );
}
